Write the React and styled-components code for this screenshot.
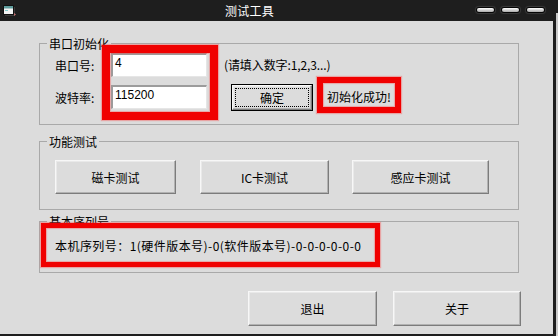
import React from "react";
import styled, { createGlobalStyle } from "styled-components";

const Global = createGlobalStyle`
  html, body { margin: 0; padding: 0; }
  body {
    width: 558px; height: 336px; overflow: hidden;
    background: linear-gradient(to bottom, #1e1e1e 13px, #c9c9c9 13px);
    font-family: "Noto Sans CJK SC", "Liberation Sans", sans-serif;
    font-size: 12px; color: #000;
  }
`;

const Frame = styled.div`
  width: 556px; height: 336px;
  background: #1e1e1e;
  display: flex; flex-direction: column;
`;

const TitleBar = styled.div`
  height: 21px; flex: none;
  display: flex; align-items: center;
  padding: 0 12px 0 3px;
  color: #fff;
`;

const Title = styled.div`
  flex: 1; text-align: center; padding-left: 6px;
  font-size: 12px; line-height: 21px; letter-spacing: 0.3px;
`;

const TitleButtons = styled.div`
  display: flex; gap: 8px; margin-top: -2px;
`;

const Pill = styled.span`
  width: 17px; height: 4px; border-radius: 3px;
  background: linear-gradient(#ffffff, #a8a8a8);
  box-shadow: 0 0 0 1px #050505, 0 0 1px 2px #3a3a3a;
`;

const Content = styled.div`
  width: 553px; height: 313px; box-sizing: border-box;
  background: #dcdcdc;
  padding: 22px 0 0 39px;
  display: flex; flex-direction: column;
`;

const Group = styled.div`
  position: relative;
  width: 480px; height: ${(p) => p.$h}px; box-sizing: border-box;
  border: 1px solid #a9a9a9;
  margin-bottom: ${(p) => p.$mb || 0}px;
  padding: ${(p) => p.$pad};
`;

const Legend = styled.span`
  position: absolute; top: -8px; left: 7px;
  padding: 0 2px; background: #dcdcdc;
  line-height: 16px; font-size: 12px;
`;

const FormGrid = styled.div`
  display: grid;
  grid-template-columns: 56px 96px auto;
  grid-template-rows: 24px 24px;
  row-gap: 8px;
  align-items: center;
`;

const Label = styled.span`
  font-size: 12px; line-height: 14px; padding-top: 2px;
`;

const Input = styled.div`
  height: 24px; box-sizing: border-box;
  background: #fff;
  border-style: solid; border-width: 2px 1px 1px 2px;
  border-color: #9c9c9c #e6e6e6 #e6e6e6 #9c9c9c;
  padding: 1px 2px;
  font-family: "Liberation Sans", sans-serif;
  font-size: 12px; line-height: 14px;
`;

const Hint = styled.span`
  margin-left: 17px;
  font-size: 12px; line-height: 14px; letter-spacing: -0.1px;
`;

const ActionCell = styled.div`
  display: flex; align-items: center; padding-left: 25px; gap: 15px;
`;

const Button = styled.button`
  width: ${(p) => p.$w}px; height: ${(p) => p.$h}px;
  box-sizing: border-box; padding: 0; margin: 0; flex: none;
  background: #dcdcdc;
  font-family: "Noto Sans CJK SC", sans-serif; font-size: 12px; color: #000;
  border-style: solid; border-width: 1px;
  border-color: #f7f7f7 #7c7c7c #7c7c7c #f7f7f7;
  box-shadow: inset -1px -1px 0 #b2b2b2, inset 1px 1px 0 #e9e9e9;
`;

const DefaultButton = styled(Button)`
  position: relative;
  outline: 1px solid #000;
  outline-offset: 0;
  &::after {
    content: ""; position: absolute; inset: 2px;
    border: 1px dotted #000;
  }
`;

const Status = styled.span`
  font-size: 12px; line-height: 14px; white-space: nowrap;
`;

const ButtonRow = styled.div`
  display: flex; gap: ${(p) => p.$gap}px;
`;

const Serial = styled.div`
  font-size: 12px; line-height: 14px; letter-spacing: 0.45px;
`;

const Highlight = styled.div`
  position: absolute; pointer-events: none;
  left: ${(p) => p.$l}px; top: ${(p) => p.$t}px;
  width: ${(p) => p.$w}px; height: ${(p) => p.$h}px;
  box-sizing: border-box;
  border: ${(p) => p.$b}px solid #f00000;
  box-shadow: 0 0 1px 1px rgba(255, 60, 60, 0.35), inset 0 0 1px 1px rgba(255, 60, 60, 0.35);
`;

const BottomRow = styled.div`
  display: flex; justify-content: flex-end; gap: 16px;
  width: 482px; margin-top: 18px;
`;

function AppIcon() {
  return (
    <svg width="13" height="12" viewBox="0 0 13 12">
      <rect x="2" y="2" width="10" height="9" fill="#3a3a3a" />
      <rect x="0.5" y="0.5" width="10" height="9" fill="#f4f4f4" stroke="#111" />
      <rect x="1" y="1" width="9" height="2.5" fill="#5e9c9c" />
      <rect x="2" y="5" width="3" height="1" fill="#8cc" />
      <path d="M11 8 L13 9.5 L11 11 Z" fill="#c07070" />
    </svg>
  );
}

export default function App() {
  return (
    <>
      <Global />
      <Frame>
        <TitleBar>
          <AppIcon />
          <Title>测试工具</Title>
          <TitleButtons>
            <Pill />
            <Pill />
            <Pill />
          </TitleButtons>
        </TitleBar>
        <Content>
          <Group $h={82} $mb={16} $pad="9px 0 0 15px">
            <Legend>串口初始化</Legend>
            <FormGrid>
              <Label>串口号:</Label>
              <Input>4</Input>
              <Hint>(请填入数字:1,2,3...)</Hint>
              <Label>波特率:</Label>
              <Input>115200</Input>
              <ActionCell>
                <DefaultButton $w={80} $h={25}>确定</DefaultButton>
                <Status>初始化成功!</Status>
              </ActionCell>
            </FormGrid>
            <Highlight $l={62} $t={1} $w={116} $h={75} $b={8} />
            <Highlight $l={277} $t={33} $w={84} $h={36} $b={6} />
          </Group>
          <Group $h={69} $mb={11} $pad="18px 0 0 15px">
            <Legend>功能测试</Legend>
            <ButtonRow $gap={24}>
              <Button $w={121} $h={34}>磁卡测试</Button>
              <Button $w={129} $h={34}>IC卡测试</Button>
              <Button $w={137} $h={34} style={{ marginLeft: -1 }}>感应卡测试</Button>
            </ButtonRow>
          </Group>
          <Group $h={52} $pad="17px 0 0 15px">
            <Legend>基本序列号</Legend>
            <Serial>本机序列号：1(硬件版本号)-0(软件版本号)-0-0-0-0-0-0</Serial>
            <Highlight $l={1} $t={1} $w={339} $h={44} $b={5} />
          </Group>
          <BottomRow>
            <Button $w={129} $h={35}>退出</Button>
            <Button $w={128} $h={35}>关于</Button>
          </BottomRow>
        </Content>
      </Frame>
    </>
  );
}
